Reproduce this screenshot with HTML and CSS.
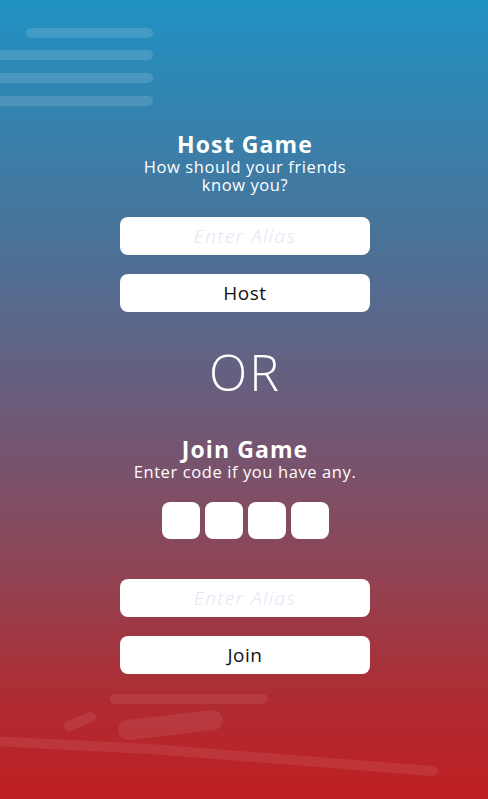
FILE: index.html
```html
<!DOCTYPE html>
<html>
<head>
<meta charset="utf-8">
<link rel="stylesheet" href="styles.css">
</head>
<body>
<div class="page">
  <svg class="deco deco-top" width="160" height="110" viewBox="0 0 160 110">
    <g stroke="#ffffff" stroke-opacity="0.13" stroke-width="10" stroke-linecap="round">
      <line x1="31" y1="33" x2="148" y2="33"/>
      <line x1="-10" y1="55" x2="148" y2="55"/>
      <line x1="-10" y1="78" x2="148" y2="78"/>
      <line x1="-10" y1="101" x2="148" y2="101"/>
    </g>
  </svg>
  <svg class="deco deco-bottom" width="488" height="130" viewBox="0 0 488 130">
    <g stroke="#ffffff" stroke-opacity="0.08" stroke-linecap="round" fill="none">
      <line x1="115" y1="34" x2="263" y2="34" stroke-width="10"/>
      <line x1="69" y1="61" x2="91" y2="52" stroke-width="10"/>
      <line x1="128" y1="65" x2="213" y2="55" stroke-width="20"/>
      <path d="M-10 76 L150 84 L433 106" stroke-width="10"/>
    </g>
  </svg>

  <main class="content">
    <section class="block">
      <h1 class="title">Host Game</h1>
      <p class="subtitle">How should your friends<br>know you?</p>
      <input class="field" type="text" placeholder="Enter Alias">
      <button class="btn">Host</button>
    </section>

    <div class="or">OR</div>

    <section class="block">
      <h1 class="title">Join Game</h1>
      <p class="subtitle">Enter code if you have any.</p>
      <div class="code">
        <input class="code-box" type="text" maxlength="1">
        <input class="code-box" type="text" maxlength="1">
        <input class="code-box" type="text" maxlength="1">
        <input class="code-box" type="text" maxlength="1">
      </div>
      <input class="field field-join" type="text" placeholder="Enter Alias">
      <button class="btn">Join</button>
    </section>
  </main>
</div>
</body>
</html>
```
FILE: styles.css
```css
html, body {
  margin: 0;
  padding: 0;
  height: 100%;
}
body {
  font-family: "Open Sans", "Noto Sans", sans-serif;
  color: #ffffff;
}
.page {
  position: relative;
  width: 488px;
  height: 799px;
  overflow: hidden;
  background: linear-gradient(180deg, #2192c3 0%, #4a7298 30%, #6a5c7c 50%, #8c4657 70%, #b02b31 88%, #bf1f22 100%);
}
.deco {
  position: absolute;
  left: 0;
}
.deco-top { top: 0; }
.deco-bottom { top: 665px; }
.content {
  position: relative;
  display: flex;
  flex-direction: column;
  align-items: center;
  padding-top: 131px;
  margin-left: 2px;
}
.block {
  display: flex;
  flex-direction: column;
  align-items: center;
  width: 250px;
}
.title {
  margin: 0 0 1px;
  font-size: 23px;
  font-weight: 700;
  line-height: 26px;
  letter-spacing: 1.1px;
}
.subtitle {
  margin: 0;
  font-size: 16.5px;
  font-weight: 400;
  line-height: 18px;
  letter-spacing: 0.6px;
  text-align: center;
  white-space: nowrap;
}
.field, .btn {
  box-sizing: border-box;
  width: 250px;
  height: 38px;
  border: none;
  border-radius: 8px;
  background: #ffffff;
  font-family: "Open Sans", "Noto Sans", sans-serif;
  text-align: center;
  outline: none;
}
.field {
  margin-top: 23px;
  font-size: 19px;
  font-style: italic;
  font-weight: 300;
  letter-spacing: 1.5px;
}
.field::placeholder {
  color: #e4e2f4;
}
.btn {
  margin-top: 19px;
  font-size: 19px;
  letter-spacing: 0.5px;
  color: #111111;
  padding: 0;
}
.or {
  margin-top: 32px;
  font-size: 50px;
  font-weight: 300;
  line-height: 56px;
  letter-spacing: 2px;
  color: #ffffff;
  margin-bottom: 36px;
}
.code {
  display: flex;
  gap: 5px;
  margin-top: 21px;
}
.code-box {
  box-sizing: border-box;
  width: 38px;
  height: 37px;
  border: none;
  border-radius: 8px;
  background: #ffffff;
  outline: none;
  padding: 0;
}
.field-join {
  margin-top: 40px;
}
```
